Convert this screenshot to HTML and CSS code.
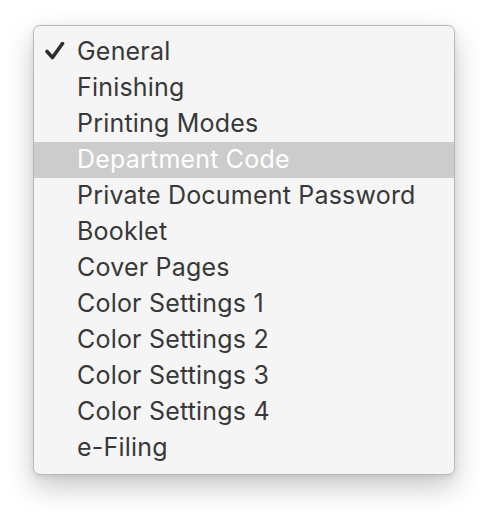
FILE: index.html
```html
<!DOCTYPE html>
<html>
<head>
<meta charset="utf-8">
<link rel="stylesheet" href="styles.css">
</head>
<body>
<div class="menu">
  <div class="item"><svg class="check" width="20" height="18" viewBox="0 0 20 18"><polyline points="2,9.5 7.5,15.5 17.5,1.5" fill="none" stroke="#2e2e2e" stroke-width="3.6" stroke-linecap="round" stroke-linejoin="round"/></svg><span>General</span></div>
  <div class="item"><span>Finishing</span></div>
  <div class="item"><span>Printing Modes</span></div>
  <div class="item selected"><span>Department Code</span></div>
  <div class="item"><span>Private Document Password</span></div>
  <div class="item"><span>Booklet</span></div>
  <div class="item"><span>Cover Pages</span></div>
  <div class="item"><span>Color Settings 1</span></div>
  <div class="item"><span>Color Settings 2</span></div>
  <div class="item"><span>Color Settings 3</span></div>
  <div class="item"><span>Color Settings 4</span></div>
  <div class="item"><span>e-Filing</span></div>
</div>
</body>
</html>
```
FILE: styles.css
```css
html, body {
  margin: 0;
  padding: 0;
  background: #ffffff;
}
body {
  width: 488px;
  height: 516px;
  padding: 25px 0 0 33px;
  box-sizing: border-box;
  font-family: Inter, "Liberation Sans", sans-serif;
}
.menu {
  width: 422px;
  box-sizing: border-box;
  background: #f5f5f5;
  border: 1px solid #b9b9b9;
  border-radius: 7px;
  padding: 8px 0;
  box-shadow: 0 12px 28px rgba(0,0,0,0.22), 0 2px 6px rgba(0,0,0,0.08);
}
.item {
  position: relative;
  height: 36px;
  box-sizing: border-box;
  display: flex;
  align-items: center;
  padding-left: 43px;
  padding-bottom: 2px;
  font-size: 25px;
  letter-spacing: 0.2px;
  color: #383838;
}
.item.selected {
  background: #cccccc;
  color: #ffffff;
}
.check {
  position: absolute;
  left: 11px;
  top: 8px;
}
```
